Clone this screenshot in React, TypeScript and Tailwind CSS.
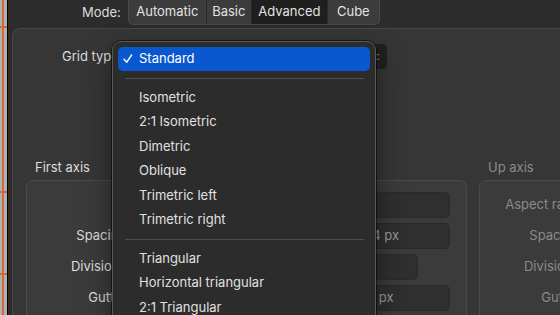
import { Fragment } from "react";

const MENU: (string | null)[] = [
  "Isometric",
  "2:1 Isometric",
  "Dimetric",
  "Oblique",
  "Trimetric left",
  "Trimetric right",
  null,
  "Triangular",
  "Horizontal triangular",
  "2:1 Triangular",
];

const MODES = [
  { label: "Automatic", w: "w-[77px]" },
  { label: "Basic", w: "w-[45px]" },
  { label: "Advanced", w: "w-[76px]", active: true },
  { label: "Cube", w: "w-[52px]" },
];

type Row = { label: string; value: string; short?: boolean };

const FIRST_ROWS: Row[] = [
  { label: "", value: "1" },
  { label: "Spacing:", value: "14 px" },
  { label: "Divisions:", value: "1", short: true },
  { label: "Gutter:", value: "0 px" },
];

const UP_ROWS: Row[] = [
  { label: "Aspect ratio:", value: "1" },
  { label: "Spacing:", value: "14 px" },
  { label: "Divisions:", value: "1", short: true },
  { label: "Gutter:", value: "0 px" },
];

function AxisBox({ title, rows, disabled }: { title: string; rows: Row[]; disabled?: boolean }) {
  return (
    <div className="flex w-[441px] shrink-0 flex-col">
      <div
        className={`h-[16px] pl-[9px] leading-[16px] ${disabled ? "text-[#8a8a8a]" : "text-[#dedede]"}`}
      >
        {title}
      </div>
      <div className="mt-[5px] flex h-[200px] flex-col gap-[5px] rounded-[7px] border border-[#4a4a4a] bg-[#3b3b3b] pt-[11px]">
        {rows.map((r, i) => (
          <div key={i} className="flex h-[26px] items-center">
            <div
              className={`w-[103px] whitespace-nowrap text-right ${disabled ? "text-[#8a8a8a]" : "text-[#dedede]"}`}
            >
              {r.label}
            </div>
            <div
              className={`ml-[226px] flex h-[26px] items-center rounded-[5px] border border-[#2a2a2a] bg-[#2f2f2f] pl-[10px] text-[#9a9a9a] ${
                r.short ? "w-[62px]" : "w-[94px]"
              }`}
            >
              {r.value}
            </div>
          </div>
        ))}
      </div>
    </div>
  );
}

export default function App() {
  return (
    <div
      className="relative flex h-[315px] w-[560px] overflow-hidden bg-[#2c2c2c] text-[13px] text-[#e2e2e2]"
      style={{ fontFamily: "Inter, 'Noto Sans', sans-serif" }}
    >
      {/* canvas edge with guides */}
      <div className="relative w-[8px] shrink-0 border-r border-black bg-[#b2b2b2]">
        <div className="absolute inset-y-0 left-[2px] w-[2px] bg-[#cf6a3c]" />
        <div className="absolute left-0 right-0 top-[26px] h-[2px] bg-[#cf6a3c]" />
        <div className="absolute left-0 right-0 top-[191px] h-[2px] bg-[#cf6a3c]" />
        <div className="absolute left-0 right-0 top-[273px] h-[2px] bg-[#cf6a3c]" />
      </div>

      <div className="flex min-w-0 flex-1 flex-col">
        {/* toolbar */}
        <div className="flex h-[28px] shrink-0 items-start">
          <div className="ml-[74px] mt-[4px] leading-[16px] text-[#dcdcdc]">Mode:</div>
          <div className="ml-[7px] flex h-[25px] overflow-hidden rounded-b-[5px] border-x border-b border-[#4a4a4a] bg-[#3c3c3c]">
            {MODES.map((m, i) => (
              <div
                key={m.label}
                className={`flex items-center justify-center ${m.w} ${i > 0 ? "border-l border-[#2a2a2a]" : ""} ${
                  m.active ? "bg-[#1f1f1f]" : ""
                }`}
              >
                {m.label}
              </div>
            ))}
          </div>
        </div>

        {/* panel */}
        <div className="ml-[4px] flex flex-1 flex-col rounded-tl-[8px] border-l border-t border-[#474747] bg-[#363636] pl-[13px]">
          <div className="mt-[15px] flex h-[25px] items-center">
            <div className="ml-[36px] w-[70px] whitespace-nowrap text-[#dcdcdc]">Grid type:</div>
            <div className="ml-[6px] flex h-[25px] w-[249px] items-center justify-end rounded-[5px] bg-[#202020] pr-[7px]">
              <svg width="5" height="10" viewBox="0 0 5 10" className="text-[#9a9a9a]">
                <path d="M1 3.5 2.5 2 4 3.5M1 6.5 2.5 8 4 6.5" stroke="currentColor" strokeWidth="1" fill="none" />
              </svg>
            </div>
          </div>

          <div className="mt-[90px] flex gap-[12px]">
            <AxisBox title="First axis" rows={FIRST_ROWS} />
            <AxisBox title="Up axis" rows={UP_ROWS} disabled />
          </div>
        </div>
      </div>

      {/* open popup menu */}
      <div className="absolute left-[112px] top-[41px] h-[300px] w-[264px] rounded-[9px] border border-[#5a5a5a] bg-[#2c2c2c] px-[5px] pt-[5px] shadow-[0_0_0_1px_rgba(0,0,0,0.55),0_12px_30px_rgba(0,0,0,0.45)]">
        <div className="flex h-[24px] items-center rounded-[5px] bg-[#0a58d0] pl-[5px] text-white">
          <svg width="16" height="10" viewBox="0 0 16 10">
            <path d="M1 5.2 3.8 8.2 8.6 1" stroke="white" strokeWidth="1.4" fill="none" strokeLinecap="round" strokeLinejoin="round" />
          </svg>
          <span>Standard</span>
        </div>
        <div className="flex h-[14px] items-center pl-[7px] pr-[6px]">
          <div className="h-px w-full bg-[#4e4e4e]" />
        </div>
        {MENU.map((item, i) => (
          <Fragment key={i}>
            {item ? (
              <div className="flex h-[24.5px] items-center pl-[21px] text-[#e0e0e0]">{item}</div>
            ) : (
              <div className="flex h-[14px] items-center pl-[7px] pr-[6px]">
                <div className="h-px w-full bg-[#4e4e4e]" />
              </div>
            )}
          </Fragment>
        ))}
      </div>
    </div>
  );
}
